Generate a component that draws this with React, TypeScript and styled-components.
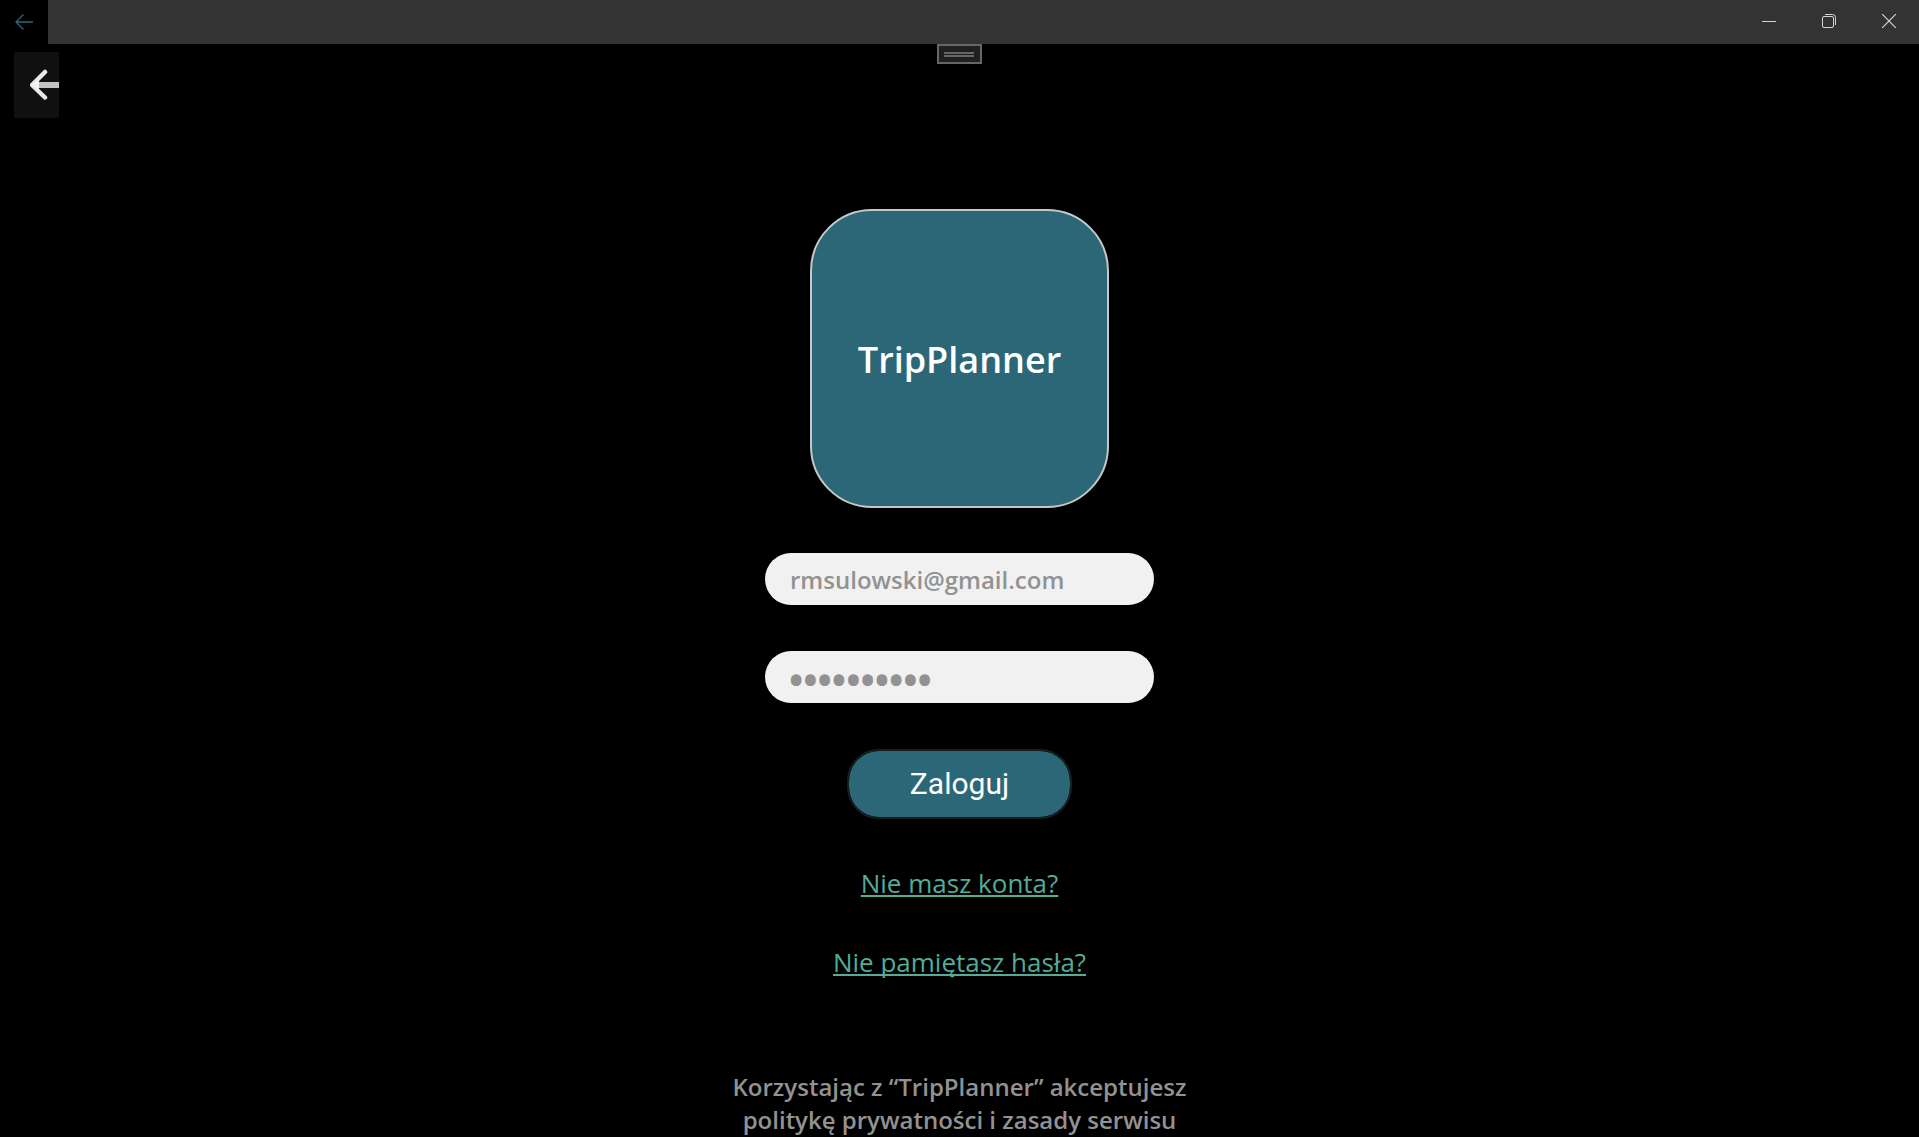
import React from 'react';
import styled, { createGlobalStyle } from 'styled-components';

const GlobalStyle = createGlobalStyle`
  *, *::before, *::after { box-sizing: border-box; }
  html, body { margin: 0; padding: 0; background: #000; }
  body { font-family: 'Open Sans', 'Noto Sans', sans-serif; color: #fff; }
  button { font: inherit; color: inherit; cursor: pointer; }
`;

const Window = styled.div`
  position: relative;
  display: flex;
  flex-direction: column;
  min-height: 100vh;
  background: #000;
  overflow: hidden;
`;

const TitleBar = styled.header`
  display: flex;
  justify-content: space-between;
  height: 44px;
  background: #333;
`;

const CaptionButton = styled.button<{ $back?: boolean }>`
  display: flex;
  align-items: center;
  justify-content: center;
  width: ${(p) => (p.$back ? '48px' : '60px')};
  padding: ${(p) => (p.$back ? '0' : '0 0 2px')};
  border: 0;
  background: ${(p) => (p.$back ? '#000' : 'transparent')};
  color: ${(p) => (p.$back ? '#2c6777' : '#d4d4d4')};
`;

const CaptionGroup = styled.div`
  display: flex;
`;

const DebugHandle = styled.button`
  position: absolute;
  top: 44px;
  left: 50%;
  display: flex;
  flex-direction: column;
  align-items: center;
  justify-content: center;
  gap: 1px;
  width: 45px;
  height: 20px;
  margin-left: -23px;
  padding: 0;
  border: 2px solid #666;
  background: #202020;
`;

const Grip = styled.span`
  width: 30px;
  height: 2px;
  background: #666;
`;

const Page = styled.main`
  display: flex;
  flex-direction: column;
  align-items: center;
  padding-top: 8px;
`;

const BackButton = styled.button`
  display: flex;
  align-items: center;
  justify-content: flex-end;
  align-self: flex-start;
  width: 45px;
  height: 66px;
  margin-left: 14px;
  padding: 0;
  border: 0;
  background: #101010;
`;

const LogoCard = styled.div`
  display: flex;
  align-items: center;
  justify-content: center;
  width: 299px;
  height: 299px;
  margin-top: 91px;
  padding-top: 2px;
  border: 2px solid #c4c8ca;
  border-radius: 62px;
  background: #2c6777;
`;

const Brand = styled.h1`
  margin: 0;
  font-size: 36px;
  font-weight: 600;
  line-height: 48px;
`;

const Form = styled.form`
  display: flex;
  flex-direction: column;
  align-items: center;
  gap: 46px;
  padding-top: 45px;
`;

const Field = styled.input`
  width: 389px;
  height: 52px;
  padding: 0 25px;
  border: 0;
  border-radius: 26px;
  outline: 0;
  background: #f1f1f1;
  color: #929292;
  font-family: 'Open Sans', 'Noto Sans', sans-serif;
  font-size: 24px;
  font-weight: 600;

  &[type='password'] {
    padding: 4px 24px 0;
    font-size: 38px;
    font-weight: 700;
  }
`;

const SubmitButton = styled.button`
  width: 225px;
  height: 70px;
  padding: 0 0 2px;
  border: 2px solid #191d1e;
  border-radius: 32px;
  background: #2c6777;
  background-clip: padding-box;
  color: #fff;
  font-family: Roboto, sans-serif;
  font-size: 30px;
`;

const Links = styled.nav`
  display: flex;
  flex-direction: column;
  align-items: center;
  gap: 43px;
  padding-top: 46px;
`;

const TextLink = styled.a`
  color: #53ab98;
  font-size: 26px;
  line-height: 36px;
  text-decoration: underline;
  text-decoration-skip-ink: none;
`;

const Terms = styled.p`
  max-width: 480px;
  margin: 90px 0 0;
  color: #929292;
  font-size: 24px;
  font-weight: 600;
  line-height: 33px;
  text-align: center;
`;

const FieldLabel = styled.label`
  display: flex;
`;

export default function App() {
  return (
    <Window>
      <GlobalStyle />
      <TitleBar>
        <CaptionButton $back aria-label="Wstecz">
          <svg width="18" height="16" viewBox="0 0 18 16" fill="none" stroke="currentColor" strokeWidth="1.3">
            <path d="M8.5 0.5 1 8l7.500 7.500M1 8h17" />
          </svg>
        </CaptionButton>
        <CaptionGroup>
          <CaptionButton aria-label="Minimalizuj">
            <svg width="14" height="14" viewBox="0 0 14 14">
              <path d="M0 7h14v1H0z" fill="currentColor" />
            </svg>
          </CaptionButton>
          <CaptionButton aria-label="Przywróć">
            <svg width="14" height="14" viewBox="0 0 14 14" fill="none" stroke="currentColor">
              <rect x="0.5" y="2.500" width="11" height="11" rx="1.500" />
              <path d="M3 .5h7.500a3 3 0 0 1 3 3V11" />
            </svg>
          </CaptionButton>
          <CaptionButton aria-label="Zamknij">
            <svg width="14" height="14" viewBox="0 0 14 14" stroke="currentColor" strokeWidth="1.200">
              <path d="M0 0l14 14M14 0 0 14" />
            </svg>
          </CaptionButton>
        </CaptionGroup>
      </TitleBar>
      <DebugHandle aria-label="Pasek narzędzi">
        <Grip />
        <Grip />
      </DebugHandle>
      <Page>
        <BackButton aria-label="Powrót">
          <svg width="29" height="32" viewBox="0 0 29 32" fill="none">
            <path d="M5 16h24" stroke="#c2c2c2" strokeWidth="6" />
            <path d="M15 3 2 16l13 12.500" stroke="#e8e8e8" strokeWidth="4.500" strokeLinecap="round" strokeLinejoin="round" />
            <path d="M2 16l7-6v12z" fill="#f2f2f2" />
          </svg>
        </BackButton>
        <LogoCard>
          <Brand>TripPlanner</Brand>
        </LogoCard>
        <Form onSubmit={(e) => e.preventDefault()}>
          <FieldLabel htmlFor="email">
            <Field id="email" type="email" aria-label="E-mail" defaultValue="rmsulowski@gmail.com" />
          </FieldLabel>
          <FieldLabel htmlFor="password">
            <Field id="password" type="password" aria-label="Hasło" defaultValue="haslohaslo" />
          </FieldLabel>
          <SubmitButton type="submit">Zaloguj</SubmitButton>
        </Form>
        <Links>
          <TextLink href="#rejestracja">Nie masz konta?</TextLink>
          <TextLink href="#haslo">Nie pamiętasz hasła?</TextLink>
        </Links>
        <Terms>Korzystając z “TripPlanner” akceptujesz politykę prywatności i zasady serwisu</Terms>
      </Page>
    </Window>
  );
}
